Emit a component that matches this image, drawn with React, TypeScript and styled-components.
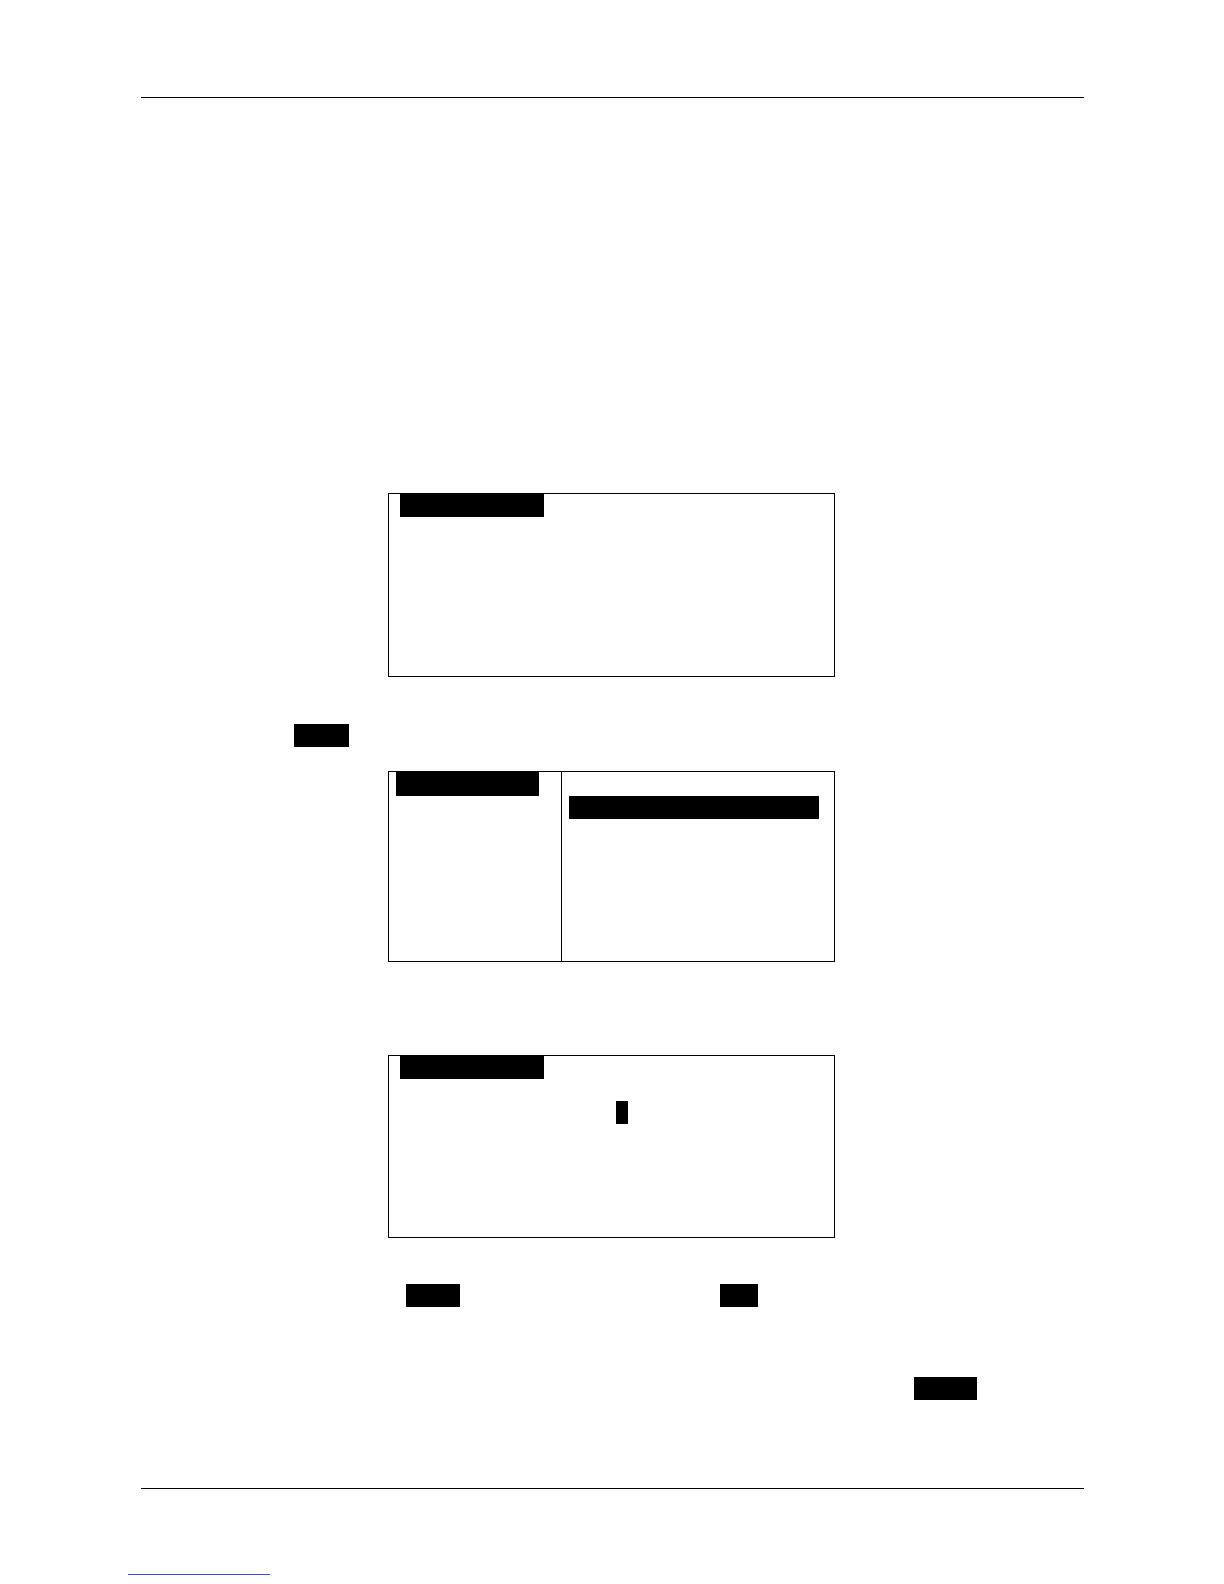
import React from "react";
import styled, { createGlobalStyle } from "styled-components";

const GlobalStyle = createGlobalStyle`
  body {
    margin: 0;
    background: #fff;
    font-family: "Liberation Serif", "Times New Roman", serif;
  }
`;

const Page = styled.div`
  width: 1224px;
  min-height: 1584px;
  display: flex;
  flex-direction: column;
`;

const Rule = styled.hr<{ $top: number }>`
  margin: ${(p) => p.$top}px 0 0 141px;
  width: 943px;
  height: 1px;
  border: 0;
  background: #000;
`;

const Body = styled.main`
  display: flex;
  flex-direction: column;
  padding-left: 141px;
`;

const Figure = styled.div<{ $top: number; $height: number }>`
  margin: ${(p) => p.$top}px 0 0 247px;
  width: 447px;
  height: ${(p) => p.$height}px;
  box-sizing: border-box;
  border: 1px solid #000;
  display: flex;
`;

const Panel = styled.div<{ $width?: number; $pad: number; $divider?: boolean }>`
  ${(p) => (p.$width ? `width: ${p.$width}px;` : "flex: 1;")}
  box-sizing: border-box;
  padding-left: ${(p) => p.$pad}px;
  border-right: ${(p) => (p.$divider ? "1px solid #000" : "0")};
  display: flex;
  flex-direction: column;
  align-items: flex-start;
`;

const Tab = styled.span<{ $w: number; $h?: number }>`
  display: block;
  width: ${(p) => p.$w}px;
  height: ${(p) => p.$h ?? 23}px;
  background: #000;
`;

const Field = styled.span<{ $w: number; $top: number; $left?: number }>`
  display: block;
  margin: ${(p) => p.$top}px 0 0 ${(p) => p.$left ?? 0}px;
  width: ${(p) => p.$w}px;
  height: 23px;
  background: #000;
`;

const TextLine = styled.p<{ $top: number }>`
  margin: ${(p) => p.$top}px 0 0;
  height: 23px;
  display: flex;
`;

const Gap = styled.span<{ $w: number }>`
  width: ${(p) => p.$w}px;
  flex: none;
`;

const Mark = styled.span<{ $w: number }>`
  width: ${(p) => p.$w}px;
  height: 23px;
  flex: none;
  background: #000;
`;

const LinkLine = styled.a`
  display: block;
  margin: 85px 0 0 128px;
  width: 142px;
  height: 1px;
  background: #3a55cf;
`;

export default function App() {
  return (
    <Page>
      <GlobalStyle />
      <Rule $top={97} />
      <Body>
        <Figure $top={395} $height={184}>
          <Panel $pad={11}>
            <Tab $w={144} />
          </Panel>
        </Figure>

        <TextLine $top={47}>
          <Gap $w={153} />
          <Mark $w={55} />
        </TextLine>

        <Figure $top={24} $height={191}>
          <Panel $width={173} $pad={7} $divider>
            <Tab $w={143} $h={24} />
          </Panel>
          <Panel $pad={7}>
            <Field $w={250} $top={24} />
          </Panel>
        </Figure>

        <Figure $top={93} $height={183}>
          <Panel $pad={11}>
            <Tab $w={144} />
            <Field $w={12} $top={22} $left={216} />
          </Panel>
        </Figure>

        <TextLine $top={46}>
          <Gap $w={265} />
          <Mark $w={54} />
          <Gap $w={260} />
          <Mark $w={38} />
        </TextLine>

        <TextLine $top={70}>
          <Gap $w={773} />
          <Mark $w={63} />
        </TextLine>
      </Body>
      <Rule $top={88} />
      <LinkLine href="#" aria-label="link" />
    </Page>
  );
}
